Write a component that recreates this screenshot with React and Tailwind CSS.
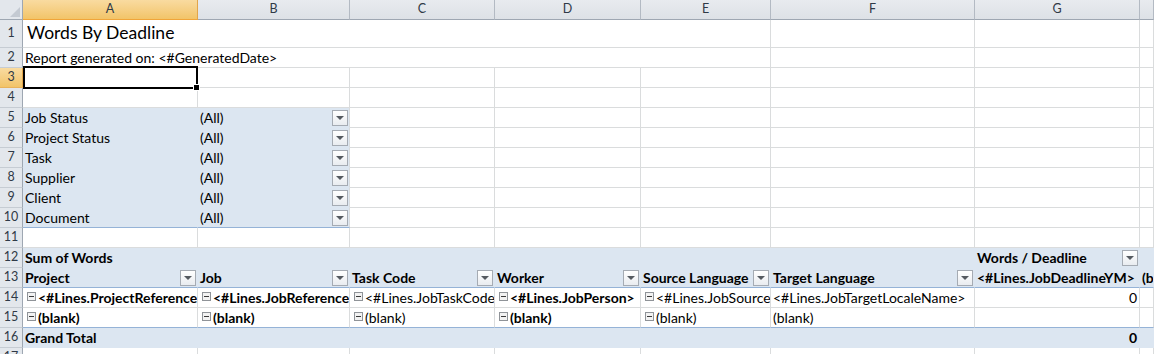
import React from "react";

// gridline + pivot colours
const rGrid = "border-r-[#dadcdd]";
const bGrid = "border-b-[#dadcdd]";
const rBlue = "border-r-[#dce6f1]";
const bBlue = "border-b-[#dce6f1]";
const bLine = "border-b-[#95b3d7]";

const white = (o = {}) => ({ r: rGrid, b: bGrid, ...o });
const blue = (o = {}) => ({ fill: true, r: rBlue, b: bBlue, ...o });
const empties = (n, f = white, o) => Array.from({ length: n }, () => f(o));

const cols = ["A", "B", "C", "D", "E", "F", "G", ""];
const filters = ["Job Status", "Project Status", "Task", "Supplier", "Client", "Document"];
const heads = ["Project", "Job", "Task Code", "Worker", "Source Language", "Target Language"];

const rows = [
  [white({ t: "Words By Deadline", span: true, title: true }), ...empties(3)],
  [white({ t: "Report generated on: <#GeneratedDate>", span: true }), ...empties(3)],
  [white({ sel: true }), ...empties(7)],
  empties(8),
  ...filters.map((f, i) => {
    const b = i === filters.length - 1 ? bLine : bBlue;
    return [blue({ t: f, b }), blue({ t: "(All)", dd: true, r: rGrid, b }), ...empties(6)];
  }),
  empties(8),
  [
    blue({ t: "Sum of Words", bold: true }),
    ...empties(5, blue),
    blue({ t: "Words / Deadline", bold: true, dd: true }),
    blue(),
  ],
  [
    ...heads.map((t) => blue({ t, bold: true, dd: true, b: bLine })),
    blue({ t: "<#Lines.JobDeadlineYM>", bold: true, b: bLine }),
    blue({ t: "(b", bold: true, b: bLine }),
  ],
  [
    white({ m: true, bold: true, t: "<#Lines.ProjectReference>" }),
    white({ m: true, bold: true, t: "<#Lines.JobReference>" }),
    white({ m: true, t: "<#Lines.JobTaskCode>" }),
    white({ m: true, bold: true, t: "<#Lines.JobPerson>" }),
    white({ m: true, t: "<#Lines.JobSourceLocaleName>" }),
    white({ t: "<#Lines.JobTargetLocaleName>" }),
    white({ t: "0", right: true }),
    white(),
  ],
  [
    white({ m: true, bold: true, t: "(blank)", b: bLine }),
    white({ m: true, bold: true, t: "(blank)", b: bLine }),
    white({ m: true, t: "(blank)", b: bLine }),
    white({ m: true, bold: true, t: "(blank)", b: bLine }),
    white({ m: true, t: "(blank)", b: bLine }),
    white({ t: "(blank)", b: bLine }),
    white({ b: bLine }),
    white({ b: bLine }),
  ],
  [
    blue({ t: "Grand Total", bold: true }),
    ...empties(5, blue),
    blue({ t: "0", bold: true, right: true }),
    blue(),
  ],
  empties(8),
];

function Drop() {
  return (
    <span className="mr-[1px] ml-auto flex h-[16px] w-[16px] shrink-0 items-center justify-center border border-[#a5abb3] bg-linear-to-b from-white to-[#e9ecf0]">
      <span className="h-0 w-0 border-x-[4px] border-t-[4px] border-x-transparent border-t-[#555a60]" />
    </span>
  );
}

function Minus() {
  return (
    <span className="mr-[2px] mb-[5px] ml-[2px] flex h-[9px] w-[9px] shrink-0 items-center justify-center border border-[#8f9398] bg-[#f2f2f2]">
      <span className="h-[1px] w-[5px] bg-[#3a3a3a]" />
    </span>
  );
}

function Cell({ c }) {
  const cls = [
    "flex items-end whitespace-nowrap border-r border-b",
    c.r,
    c.b,
    c.fill ? "bg-[#dce6f1]" : "",
    c.sel ? "relative" : "overflow-hidden",
    c.span ? "col-span-5" : "",
    c.bold ? "font-bold" : "",
    c.title ? "pb-[3px] pl-[4px] text-[17.5px] leading-[22px]" : "pb-[1px] pl-[2px] leading-[16px]",
    c.right ? "justify-end pr-[2px]" : "",
  ].join(" ");
  return (
    <div className={cls}>
      {c.m && <Minus />}
      {c.t && <span>{c.t}</span>}
      {c.dd && <Drop />}
      {c.sel && (
        <div className="absolute -top-[2px] left-0 z-10 h-[23px] w-[175px] border-2 border-black">
          <div className="absolute -right-[3px] -bottom-[3px] h-[5px] w-[5px] bg-black outline outline-1 outline-white" />
        </div>
      )}
    </div>
  );
}

function RowHead({ n }) {
  const on = n === 3;
  return (
    <div
      className={`flex items-center justify-center border-r border-b text-[12.5px] text-[#2f3946] ${
        on
          ? "border-r-[#e2a54a] border-b-[#e8b35c] bg-linear-to-b from-[#f9dba0] to-[#f2c468]"
          : "border-r-[#9ea7b2] border-b-[#c6ccd3] bg-[#e3e7ec]"
      }`}
    >
      {n}
    </div>
  );
}

function Corner() {
  return (
    <div className="relative border-r border-b border-r-[#9ea7b2] border-b-[#9ea7b2] bg-[#e3e7ec]">
      <svg className="absolute right-[2px] bottom-[2px]" width="10" height="10" viewBox="0 0 10 10">
        <path d="M10 0 L10 10 L0 10 Z" fill="#c4cad2" />
      </svg>
    </div>
  );
}

export default function App() {
  return (
    <div className="h-[354px] w-[1154px] overflow-hidden bg-white font-['Lato',sans-serif] text-[14px] text-black">
      <div className="grid grid-cols-[23px_175px_152px_145px_146px_130px_204px_165px_1fr] grid-rows-[20px_28px_repeat(16,20px)]">
        <Corner />
        {cols.map((l, i) => (
          <div
            key={l + i}
            className={`flex items-center justify-center border-r border-b text-[12.5px] text-[#2f3946] ${
              i === 0
                ? "border-r-[#e2a54a] border-b-[#f0a53a] bg-linear-to-b from-[#f9dba0] to-[#f2c468]"
                : "border-r-[#b3bac3] border-b-[#9ea7b2] bg-linear-to-b from-[#e8ebef] to-[#dde1e6]"
            }`}
          >
            {l}
          </div>
        ))}
        {rows.map((row, i) => (
          <React.Fragment key={i}>
            <RowHead n={i + 1} />
            {row.map((c, j) => (
              <Cell key={j} c={c} />
            ))}
          </React.Fragment>
        ))}
      </div>
    </div>
  );
}
